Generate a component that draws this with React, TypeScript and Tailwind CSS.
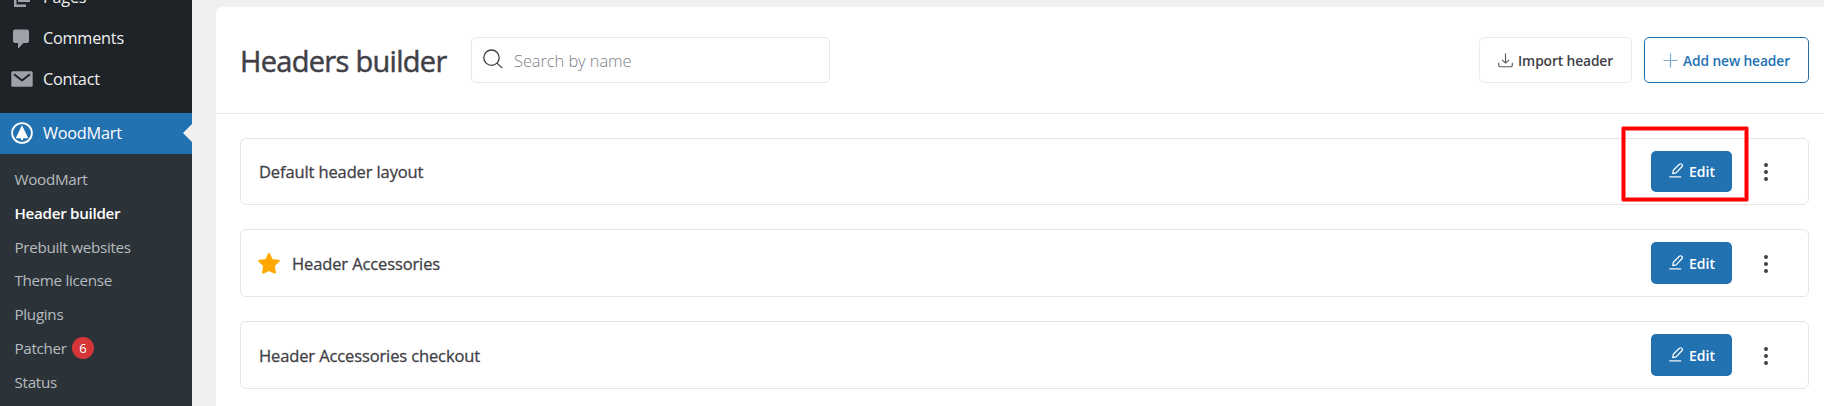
import type { ReactNode } from "react";

function PagesIcon() {
  return (
    <svg viewBox="0 0 18 20" className="h-5 w-[18px]" fill="#9ca2a7">
      <path d="M5 0h12v14H5z" />
      <path d="M1 4h2.500v12.500H13V19H1z" />
      <path d="M7.500 10h7v1.500h-7z" fill="#1d2327" />
    </svg>
  );
}

function CommentIcon() {
  return (
    <svg viewBox="0 0 18 20" className="mr-0.5 h-5 w-[18px]" fill="#9ca2a7">
      <path d="M3 .5h12q2 0 2 2v9.500q0 2-2 2h-3.500l-5.500 5.800v-5.800H3q-2 0-2-2V2.500q0-2 2-2z" />
    </svg>
  );
}

function MailIcon() {
  return (
    <svg viewBox="0 0 22 16" className="mb-0.5 h-4 w-[22px]">
      <rect x=".3" y=".3" width="21.400" height="15.400" rx="1.500" fill="#9ca2a7" />
      <path d="M3 3.200l8 6.300 8-6.300" fill="none" stroke="#1d2327" strokeWidth="2" />
    </svg>
  );
}

function TreeIcon() {
  return (
    <svg viewBox="0 0 22 22" className="mb-0.5 size-[22px]">
      <circle cx="11" cy="11" r="9.900" fill="none" stroke="#fff" strokeWidth="1.800" />
      <path d="M11 3.300l6.300 12.900h-5.300v1.800h-2v-1.800H4.700z" fill="#fff" />
    </svg>
  );
}

function SearchIcon() {
  return (
    <svg viewBox="0 0 20 20" className="size-5" fill="none" stroke="#3f4147" strokeWidth="1.300">
      <circle cx="8.500" cy="8.700" r="7.700" />
      <path d="M14 14.100l5.300 5" />
    </svg>
  );
}

function ImportIcon() {
  return (
    <svg viewBox="0 0 15 15" className="size-[15px]" fill="none" stroke="#55585c" strokeWidth="1.100">
      <path d="M7.500.5v9.500M4 6.800l3.500 3.300L11 6.800M.7 9.700v2.600q0 1.500 1.500 1.500h10.600q1.500 0 1.500-1.500V9.700" />
    </svg>
  );
}

function PlusIcon() {
  return (
    <svg viewBox="0 0 15 15" className="size-[15px]" stroke="#7fabd0" strokeWidth="1.200">
      <path d="M7.500.5v14M.5 7.500h14" />
    </svg>
  );
}

function EditIcon() {
  return (
    <svg viewBox="0 0 15 15" className="mb-0.5 size-[15px]" fill="none" stroke="#fff" strokeWidth="1.200" strokeLinejoin="round">
      <path d="M3.800 10.600l.5-3.400 6.100-6q1-.9 2.300 0 1.300 1.100.4 2.300l-6 6.300z" />
      <path d="M.3 13.900h11.900" />
    </svg>
  );
}

function StarIcon() {
  return (
    <svg viewBox="0 0 22 21" className="h-[21px] w-[22px]" fill="#ffa800" stroke="#ffa800" strokeWidth="2.400" strokeLinejoin="round">
      <path d="M11 1.300l2.700 5.900 6.800.8-4.900 4.700 1.100 6.700L11 16.700l-5.700 2.700 1.100-6.700L1.500 8l6.800-.8z" />
    </svg>
  );
}

function DotsIcon() {
  return (
    <svg viewBox="0 0 4 18" className="mt-px h-[18px] w-1" fill="#3f4147">
      <circle cx="2" cy="2" r="2" />
      <circle cx="2" cy="9" r="2" />
      <circle cx="2" cy="16" r="2" />
    </svg>
  );
}

const submenu = [
  { label: "WoodMart" },
  { label: "Header builder", current: true },
  { label: "Prebuilt websites" },
  { label: "Theme license" },
  { label: "Plugins" },
  { label: "Patcher", count: 6 },
  { label: "Status" },
];

function MenuItem({ icon, label }: { icon: ReactNode; label: string }) {
  return (
    <a className="flex h-[41px] shrink-0 items-center text-[16.3px] tracking-[-0.25px]">
      <span className="flex w-[43px] justify-center">{icon}</span>
      <span className="whitespace-nowrap">{label}</span>
    </a>
  );
}

function Sidebar() {
  return (
    <nav className="flex h-full w-48 shrink-0 flex-col overflow-hidden bg-[#1d2327] text-[#f0f0f1]">
      <div className="-mt-[23px] flex h-[136px] shrink-0 flex-col">
        <MenuItem icon={<PagesIcon />} label="Pages" />
        <MenuItem icon={<CommentIcon />} label="Comments" />
        <MenuItem icon={<MailIcon />} label="Contact" />
      </div>
      <div className="relative shrink-0 bg-[#2271b1] text-white">
        <MenuItem icon={<TreeIcon />} label="WoodMart" />
        <svg viewBox="0 0 9 18" className="absolute top-[11px] right-0 h-[18px] w-[9px]" fill="#f0f0f1">
          <path d="M9 0v18L0 9z" />
        </svg>
      </div>
      <ul className="flex-1 bg-[#2c3338] pt-[8.500px] pl-[14.500px]">
        {submenu.map((item) => (
          <li
            key={item.label}
            className={`flex h-[33.800px] items-center text-[15.2px] tracking-[-0.3px] whitespace-nowrap ${item.current ? "font-semibold text-white" : "text-[#b7bbbf]"}`}
          >
            {item.label}
            {item.count && (
              <span className="ml-[5px] flex size-[22px] items-center justify-center rounded-full bg-[#d63638] text-[13px] text-white">
                {item.count}
              </span>
            )}
          </li>
        ))}
      </ul>
    </nav>
  );
}

const headers = [
  { name: "Default header layout", size: "h-[67px]", button: "h-[41px]" },
  { name: "Header Accessories", size: "h-[68px]", button: "h-[42px]", starred: true },
  { name: "Header Accessories checkout", size: "h-[68px]", button: "h-[42px]" },
];

export default function App() {
  return (
    <div className="flex h-[406px] w-[1824px] overflow-hidden bg-[#f0f0f1] font-['Open_Sans','Noto_Sans',sans-serif]">
      <Sidebar />
      <main className="mt-[7px] ml-6 flex-1 rounded-tl-md bg-white text-[#3f4147]">
        <header className="flex h-[107px] items-center border-b border-[#e8e8e9] pr-[15px] pl-6">
          <h1 className="w-[231px] pt-px text-[29px] tracking-[-0.7px] whitespace-nowrap [-webkit-text-stroke:0.5px]">
            Headers builder
          </h1>
          <div className="flex h-[46px] w-[359px] items-center rounded-[5px] border border-[#e8e8e9] pl-[11px]">
            <div className="pb-[3px]">
              <SearchIcon />
            </div>
            <input
              placeholder="Search by name"
              className="mt-0.5 ml-[11px] w-60 text-[16.5px] font-light tracking-[-0.1px] outline-none placeholder:text-[#7e8086]"
            />
          </div>
          <div className="ml-auto flex gap-3 text-[13.800px] font-semibold tracking-[-0.12px] whitespace-nowrap">
            <button className="flex h-[46px] w-[153px] items-center rounded-[5px] border border-[#ebebec] pl-[18px]">
              <ImportIcon />
              <span className="mt-0.5 ml-[5px]">Import header</span>
            </button>
            <button className="flex h-[46px] w-[165px] items-center rounded-[5px] border border-[#2271b1] pl-[18px] text-[#2271b1]">
              <PlusIcon />
              <span className="mt-0.5 ml-[5px]">Add new header</span>
            </button>
          </div>
        </header>
        <ul className="flex flex-col gap-6 pt-6 pr-[15px] pl-6">
          {headers.map((header, index) => (
            <li key={header.name} className={`flex items-center rounded-md border border-[#e5e5e6] pl-[18px] ${header.size}`}>
              {header.starred && (
                <span className="-ml-px mr-3">
                  <StarIcon />
                </span>
              )}
              <span className="pt-0.5 text-[16.5px] tracking-[-0.12px] whitespace-nowrap [-webkit-text-stroke:0.3px]">
                {header.name}
              </span>
              <div className="relative ml-auto">
                <button className={`flex w-[81px] items-center rounded-[5px] bg-[#2271b1] pl-[18px] text-[14px] font-semibold text-white ${header.button}`}>
                  <EditIcon />
                  <span className="ml-[5px]">Edit</span>
                </button>
                {index === 0 && (
                  <div className="absolute -top-6 -left-[29px] h-[74px] w-[126px] rounded-[1px] border-3 border-[#ff0000] outline-1 outline-[#ff000080]">
                    <div className="size-full border border-[#ff000080]" />
                  </div>
                )}
              </div>
              <button className="mr-[40px] ml-8">
                <DotsIcon />
              </button>
            </li>
          ))}
        </ul>
      </main>
    </div>
  );
}
